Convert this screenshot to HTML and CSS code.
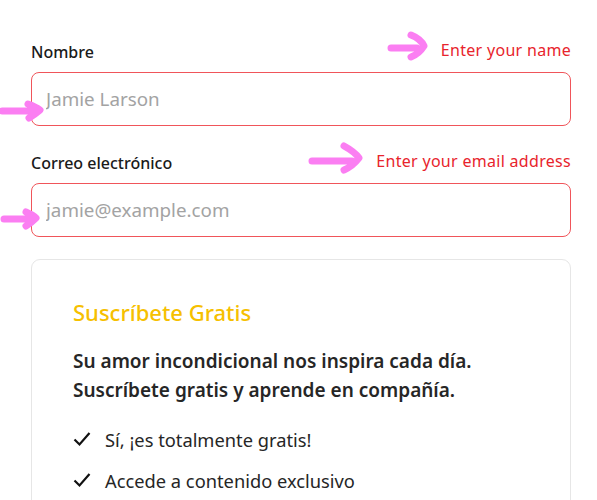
FILE: index.html
```html
<!DOCTYPE html>
<html>
<head>
<meta charset="utf-8">
<link rel="stylesheet" href="styles.css">
</head>
<body>
<form class="signup">
  <div class="field field_name">
    <div class="field_head">
      <label for="name">Nombre</label>
      <span class="hint">
        <svg class="arrow_up" width="42" height="30" viewBox="0 0 42 30"><path d="M4 17 H30 M24 4 Q34 8 37 15 Q32 23 24 26" /></svg>
        Enter your name
      </span>
    </div>
    <input id="name" type="text" placeholder="Jamie Larson">
    <svg class="arrow_side" width="50" height="24" viewBox="0 0 50 24"><path d="M4 12 H38 M30 5 Q38 8 42 11 Q36 16 31 19" /></svg>
  </div>

  <div class="field field_email">
    <div class="field_head">
      <label for="email">Correo electrónico</label>
      <span class="hint">
        <svg class="arrow_up" width="56" height="32" viewBox="0 0 56 32"><path d="M4 19 H44 M36 4 Q47 10 51 16 Q45 24 36 28" /></svg>
        Enter your email address
      </span>
    </div>
    <input id="email" type="email" placeholder="jamie@example.com">
    <svg class="arrow_side" width="44" height="24" viewBox="0 0 44 24"><path d="M4 12 H32 M26 5 Q33 8 36 11 Q31 16 26 19" /></svg>
  </div>

  <div class="card">
    <h2>Suscríbete Gratis</h2>
    <p>Su amor incondicional nos inspira cada día. Suscríbete gratis y aprende en compañía.</p>
    <ul class="checks">
      <li><svg width="18" height="16" viewBox="0 0 18 16"><path d="M1.5 8.5 L6.5 13.5 L16.5 2" /></svg>Sí, ¡es totalmente gratis!</li>
      <li><svg width="18" height="16" viewBox="0 0 18 16"><path d="M1.5 8.5 L6.5 13.5 L16.5 2" /></svg>Accede a contenido exclusivo</li>
    </ul>
  </div>
</form>
</body>
</html>
```
FILE: styles.css
```css
body {
  margin: 0;
  background: #ffffff;
  font-family: "Noto Sans", "Open Sans", sans-serif;
  color: #1f1f1f;
}

.signup {
  padding: 42px 26px 0 31px;
}

.field {
  position: relative;
  margin-bottom: 27px;
}
.field_email {
  margin-bottom: 22px;
}

.field_head {
  display: flex;
  justify-content: space-between;
  align-items: center;
  height: 20px;
  margin-bottom: 10px;
}

.field_head label {
  font-size: 16px;
  font-weight: 500;
  color: #1a1a1a;
}

.hint {
  position: relative;
  top: -2px;
  font-size: 16px;
  color: #e8242c;
  letter-spacing: 0.3px;
}

.arrow_up {
  position: absolute;
  right: 100%;
  margin-right: 12px;
  top: -8px;
}

.arrow_up path,
.arrow_side path {
  fill: none;
  stroke: #fb7ef2;
  stroke-width: 7;
  stroke-linecap: round;
  stroke-linejoin: round;
}

.arrow_side {
  position: absolute;
  left: -33px;
  top: 57px;
}
.field_email .arrow_side {
  left: -31px;
  top: 54px;
}

.field input {
  display: block;
  box-sizing: border-box;
  width: 100%;
  height: 54px;
  padding: 0 14px;
  border: 1px solid #f0555a;
  border-radius: 8px;
  font-family: inherit;
  font-size: 18.8px;
  color: #222;
  background: #fff;
}
.field input::placeholder {
  color: #a3a3a3;
}

.card {
  border: 1px solid #e6e6e6;
  border-radius: 9px;
  padding: 38px 41px 30px;
}

.card h2 {
  margin: 0 0 21px;
  font-size: 22px;
  line-height: 28px;
  font-weight: 500;
  color: #f6c000;
}

.card p {
  margin: 0 0 21px;
  font-size: 19px;
  line-height: 29px;
  font-weight: 600;
  color: #262626;
}

.checks {
  list-style: none;
  margin: 0;
  padding: 0;
}
.checks li {
  display: flex;
  align-items: center;
  gap: 14px;
  height: 26px;
  margin-bottom: 15px;
  font-size: 18.3px;
  color: #262626;
}
.checks svg path {
  fill: none;
  stroke: #111;
  stroke-width: 2.2;
}
```
